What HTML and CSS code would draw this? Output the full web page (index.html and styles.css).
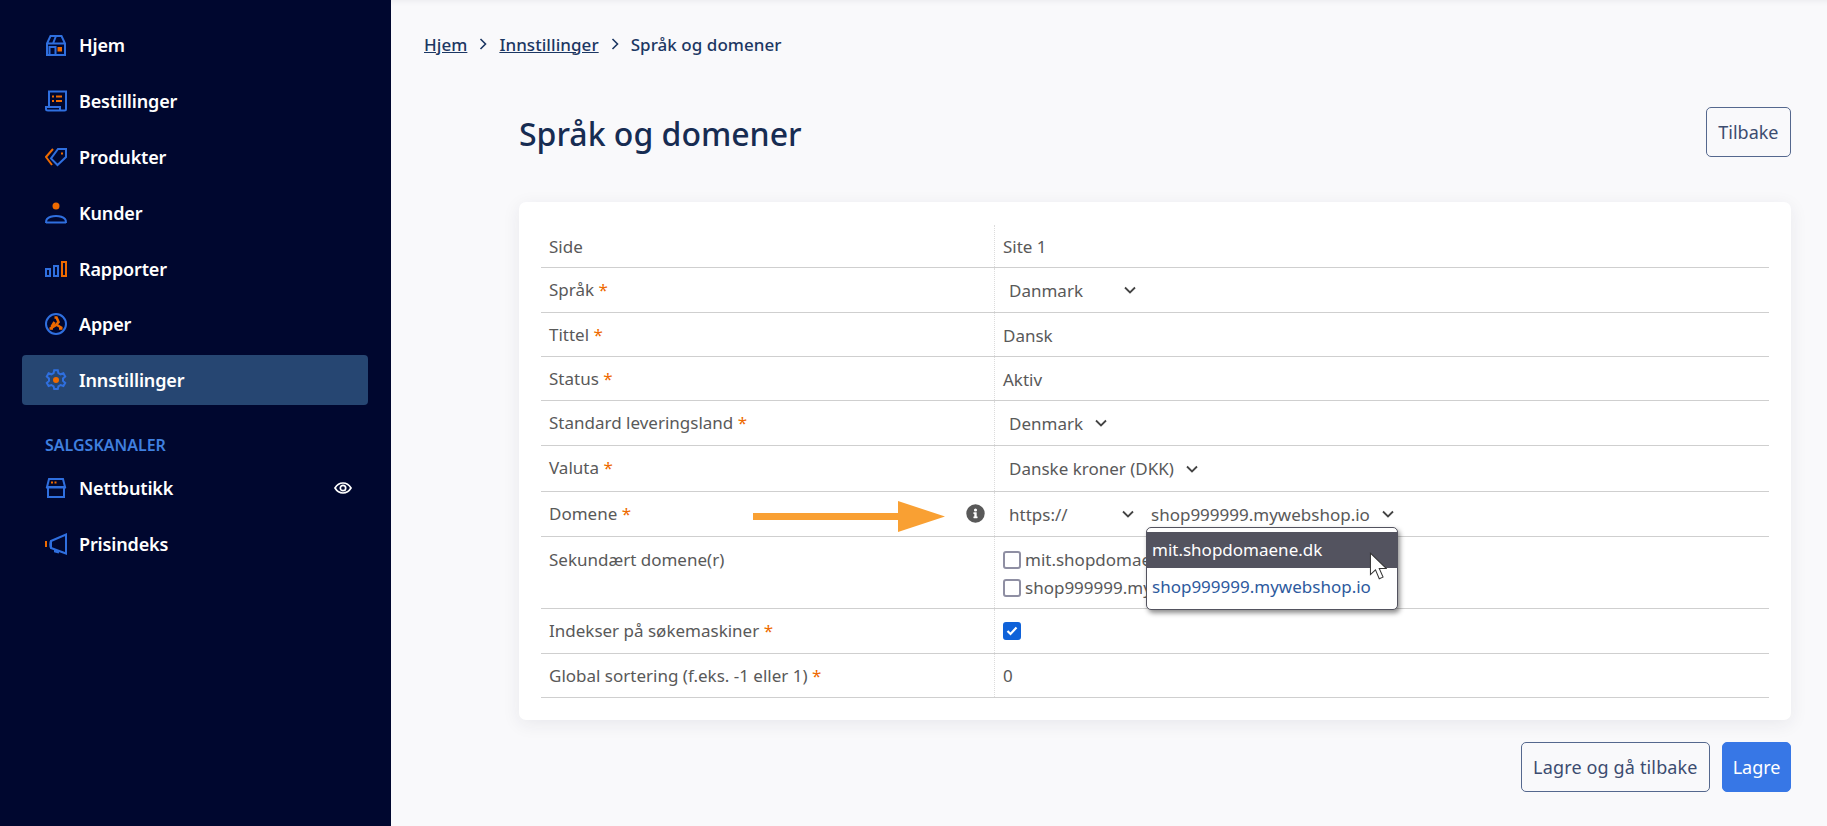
FILE: index.html
```html
<!DOCTYPE html>
<html lang="no">
<head>
<meta charset="utf-8">
<title>Språk og domener</title>
<link rel="stylesheet" href="styles.css">
</head>
<body>
<div class="app">
  <aside class="sidebar">
    <nav class="nav">
      <a class="nav-item"><svg class="nav-icon" viewBox="0 0 22 22"><path class="b" d="M2 9.500 5.500 2h11L20 9.500V21H2zM2 9.500h18M11 2l-3 7.500M4.500 21v-8h6v8"/><rect class="of" x="12.500" y="13" width="4.500" height="4.500"/></svg><span>Hjem</span></a>
      <a class="nav-item"><svg class="nav-icon" viewBox="0 0 22 22"><path class="b" d="M4 17V1.500h17V19c0 1-.5 1.500-1.500 1.500H3c-1 0-2-.5-2-1.500v-2h14v2c0 1 .5 1.500 1.500 1.500"/><path class="o" d="M7 6.500h2M7 11h2M11 6.500h6M11 11h6" stroke-width="2"/></svg><span>Bestillinger</span></a>
      <a class="nav-item"><svg class="nav-icon" viewBox="0 0 22 22"><path class="o" d="M8 3 1 11l6 8"/><path class="b" d="M13 3h8v8l-8.500 8L6 12.500z"/><rect class="of" x="16" y="6.500" width="2" height="2"/></svg><span>Produkter</span></a>
      <a class="nav-item"><svg class="nav-icon" viewBox="0 0 22 22"><circle class="of" cx="11" cy="4" r="3.500"/><path class="b" d="M1 21c0-2 0-3 1-4 2-2 5-3 9-3s7 1 9 3c1 1 1 2 1 4M1 20.500h20"/></svg><span>Kunder</span></a>
      <a class="nav-item"><svg class="nav-icon" viewBox="0 0 22 22"><rect class="b" x="1" y="11" width="4" height="7"/><rect class="b" x="9" y="8" width="4" height="10"/><rect class="o" x="17" y="4" width="4" height="14"/></svg><span>Rapporter</span></a>
      <a class="nav-item"><svg class="nav-icon" viewBox="0 0 22 22"><circle class="b" cx="11" cy="11" r="10"/><path class="o o-thick" d="M9.500 4.500h2l2 4.500-2.500 3-5.500 3.500M11 11.500l6 3.500M9.500 9l-3 5"/><path class="o o-thick" d="M4.500 15.500H8M14 15.500h3.500"/></svg><span>Apper</span></a>
      <a class="nav-item active"><svg class="nav-icon" viewBox="0 0 22 22"><path class="b" d="M9.200 1.200h3.600l.6 2.900 2.200 1.200 2.800-1 1.800 3.200-2.200 1.900v2.500l2.200 2-1.800 3.100-2.800-1-2.200 1.300-.6 2.800H9.200l-.6-2.800-2.200-1.300-2.800 1-1.800-3.100 2.200-2V9.400L1.800 7.500l1.800-3.200 2.800 1 2.200-1.200z"/><circle class="of" cx="11" cy="11" r="3"/></svg><span>Innstillinger</span></a>
      <div class="nav-heading">SALGSKANALER</div>
      <a class="nav-item"><svg class="nav-icon" viewBox="0 0 22 22"><path class="b" d="M4 2h14l2 8H2zM1 10.500h20M3 10.500V20h16v-9.500"/><path class="o" d="M6 5.500h2M9.500 5.500h2" stroke-width="2"/></svg><span>Nettbutikk</span><svg class="eye" viewBox="0 0 18 12"><path d="M1 6c2-3.300 4.700-5 8-5s6 1.700 8 5c-2 3.300-4.700 5-8 5s-6-1.700-8-5z"/><circle cx="9" cy="6" r="2.700"/></svg></a>
      <a class="nav-item"><svg class="nav-icon" viewBox="0 0 22 22"><path class="b" d="M21 1.500v19L6 15v-7zM6 8c-1 1-1 6 0 7M10 16v2.500l4 1"/><path class="o" d="M1 8v6" stroke-width="2"/></svg><span>Prisindeks</span></a>
    </nav>
  </aside>
  <main class="main">
    <ol class="crumbs">
      <li><a>Hjem</a></li>
      <li class="crumb-sep"><svg viewBox="0 0 8 12"><path d="m1.500 1 5 5-5 5"/></svg></li>
      <li><a>Innstillinger</a></li>
      <li class="crumb-sep"><svg viewBox="0 0 8 12"><path d="m1.500 1 5 5-5 5"/></svg></li>
      <li class="crumb-current">Språk og domener</li>
    </ol>
    <div class="content">
      <header class="page-head">
        <h1>Språk og domener</h1>
        <button class="btn btn-outline">Tilbake</button>
      </header>
      <section class="card">
        <div class="row row-first"><div class="label">Side</div><div class="value">Site 1</div></div>
        <div class="row row-sel"><div class="label">Språk <i>*</i></div><div class="value"><span class="select sel-lang">Danmark<svg class="chev" viewBox="0 0 12 8"><path d="m1 1.500 5 5 5-5"/></svg></span></div></div>
        <div class="row"><div class="label">Tittel <i>*</i></div><div class="value value-plain">Dansk</div></div>
        <div class="row"><div class="label">Status <i>*</i></div><div class="value value-plain">Aktiv</div></div>
        <div class="row row-sel"><div class="label">Standard leveringsland <i>*</i></div><div class="value"><span class="select">Denmark<svg class="chev" viewBox="0 0 12 8"><path d="m1 1.500 5 5 5-5"/></svg></span></div></div>
        <div class="row row-val"><div class="label">Valuta <i>*</i></div><div class="value"><span class="select">Danske kroner (DKK)<svg class="chev" viewBox="0 0 12 8"><path d="m1 1.500 5 5 5-5"/></svg></span></div></div>
        <div class="row row-sel">
          <div class="label">Domene <i>*</i>
            <svg class="arrow" viewBox="0 0 192 31"><path d="M0 12h145V0l47 15.500L145 31V19H0z"/></svg>
            <svg class="info" viewBox="0 0 512 512"><path d="M256 8a248 248 0 1 0 0 496 248 248 0 0 0 0-496zm0 110a42 42 0 1 1 0 84 42 42 0 0 1 0-84zm56 254c0 7-5 12-12 12h-88c-7 0-12-5-12-12v-24c0-7 5-12 12-12h12v-64h-12c-7 0-12-5-12-12v-24c0-7 5-12 12-12h64c7 0 12 5 12 12v100h12c7 0 12 5 12 12z"/></svg>
          </div>
          <div class="value">
            <span class="select sel-proto">https://<svg class="chev" viewBox="0 0 12 8"><path d="m1 1.500 5 5 5-5"/></svg></span>
            <span class="select sel-domain">shop999999.mywebshop.io<svg class="chev" viewBox="0 0 12 8"><path d="m1 1.500 5 5 5-5"/></svg>
              <span class="dropdown">
                <span class="opt opt-hover">mit.shopdomaene.dk</span>
                <span class="opt">shop999999.mywebshop.io</span>
                <svg class="cursor" viewBox="0 0 14 23"><path d="M1 1v17l4-3.800 3 7 3-1.300-3-6.900h5.500z"/></svg>
              </span>
            </span>
          </div>
        </div>
        <div class="row row-tall">
          <div class="label">Sekundært domene(r)</div>
          <div class="value checks">
            <label class="check"><span class="box"></span>mit.shopdomaene.dk</label>
            <label class="check"><span class="box"></span>shop999999.mywebshop.io</label>
          </div>
        </div>
        <div class="row row-sel"><div class="label">Indekser på søkemaskiner <i>*</i></div><div class="value"><span class="box box-on"><svg viewBox="0 0 12 10"><path d="m1.500 5 3 3 6-6.500"/></svg></span></div></div>
        <div class="row"><div class="label">Global sortering (f.eks. -1 eller 1) <i>*</i></div><div class="value">0</div></div>
      </section>
      <footer class="actions">
        <button class="btn btn-outline btn-wide">Lagre og gå tilbake</button>
        <button class="btn btn-primary">Lagre</button>
      </footer>
    </div>
  </main>
</div>
</body>
</html>
```
FILE: styles.css
```css
* { box-sizing: border-box; }
html, body { margin: 0; height: 100%; overflow: hidden; }
body { font-family: "Noto Sans", "Open Sans", sans-serif; font-size: 17px; color: #595959; }
.app { display: flex; height: 826px; }

.sidebar { width: 391px; flex: none; background: #00072f; padding: 20px 23px 0 22px; }
.nav { display: flex; flex-direction: column; }
.nav-item { display: flex; align-items: center; height: 50px; margin-bottom: 5.900px; padding: 0 16px 0 23px; border-radius: 4px; color: #fff; font-size: 18px; font-weight: 600; letter-spacing: -.15px; }
.nav-item span { margin-left: 12px; }
.nav-item.active { background: #264672; }
.nav-icon { width: 22px; height: 22px; flex: none; fill: none; }
.b { fill: none; stroke: #2f6fdf; stroke-width: 2; }
.o { fill: none; stroke: #ee6a00; stroke-width: 2; }
.o-thick { stroke-width: 2.600; }
.of { fill: #ee6a00; }
.eye { width: 18px; height: 12px; margin-left: auto; fill: none; stroke: #fff; stroke-width: 1.700; }
.nav-heading { margin: 23px 0 7px; padding-left: 23px; color: #3f7fdf; font-size: 16px; font-weight: 600; height: 22px; }

.main { flex: 1; background: #f9f9fb; padding: 31px 36px 0 33px; box-shadow: inset 0 6px 6px -6px #e4e4e8; }
.crumbs { display: flex; align-items: center; list-style: none; margin: 0; padding: 0; font-size: 17px; font-weight: 500; color: #1c3763; height: 26px; letter-spacing: .05px; }
.crumbs a { text-decoration: underline; }
.crumb-sep { width: 32px; display: flex; justify-content: center; }
.crumb-sep svg { width: 8px; height: 12px; fill: none; stroke: #1c3763; stroke-width: 1.600; }

.content { margin-left: 95px; }
.page-head { display: flex; align-items: center; justify-content: space-between; margin-top: 50px; height: 50px; }
h1 { margin: 2px 0 0; font-size: 32px; font-weight: 500; color: #172c52; }
.btn { height: 50px; padding: 0 11.500px; font: inherit; font-size: 18px; border-radius: 5px; }
.btn-outline { background: transparent; border: 1px solid #55688e; color: #3c4c70; }
.btn-wide { letter-spacing: .15px; }
.btn-primary { background: #3777e6; border: 1px solid #3777e6; color: #fff; padding: 0 9.500px; }

.card { margin-top: 45px; height: 518px; padding: 23px 22px 0; background: #fff; border-radius: 7px; box-shadow: 0 4px 18px rgba(40, 40, 70, .08); }
.row { display: flex; height: 44px; border-bottom: 1px solid #cfcfcf; }
.row-first { height: 43px; }
.row-sel { height: 45px; }
.row-val { height: 46px; }
.row-tall { height: 72px; }
.label { position: relative; width: 453px; flex: none; padding: 10px 8px 0; }
.label i { font-style: normal; color: #ee6a00; }
.value { flex: 1; display: flex; align-items: center; gap: 11px; padding-left: 8px; border-left: 1px dotted #dcdcdc; }
.value-plain { padding-top: 2px; }
.select { display: inline-flex; align-items: center; padding-left: 6px; }
.chev { width: 12px; height: 8px; fill: none; stroke: #444; stroke-width: 1.800; margin-left: 12px; }
.sel-lang .chev { margin-left: 41px; }
.sel-proto { width: 131px; justify-content: space-between; }
.sel-domain { position: relative; }
.arrow { position: absolute; left: 212px; top: 9px; width: 192px; height: 31px; fill: #f9a033; }
.info { position: absolute; right: 9px; top: 12px; width: 19px; height: 19px; fill: #595959; }
.dropdown { position: absolute; left: 1px; top: 24px; width: 252px; height: 83px; padding: 4px 0; display: flex; flex-direction: column; background: #fff; border: 1px solid #53535f; border-radius: 5px; box-shadow: 2px 3px 5px rgba(0, 0, 0, .45); z-index: 2; }
.opt { height: 37px; padding: 0 5px; display: flex; align-items: center; color: #2d5a9e; }
.opt-hover { background: #53535f; color: #fff; }
.cursor { position: absolute; left: 222px; top: 24px; width: 18px; height: 29px; fill: #fff; stroke: #333; stroke-width: .8; }
.checks { flex-direction: column; align-items: flex-start; gap: 5px; padding-top: 11px; justify-content: flex-start; }
.check { display: flex; align-items: center; gap: 4px; }
.box { display: inline-block; width: 18px; height: 18px; flex: none; border: 2px solid #8f8fa3; border-radius: 3px; background: #fff; }
.box-on { background: #0f62d9; border-color: #0f62d9; display: flex; align-items: center; justify-content: center; }
.box-on svg { width: 12px; height: 10px; fill: none; stroke: #fff; stroke-width: 2.200; }
.actions { display: flex; justify-content: flex-end; gap: 12px; margin-top: 22px; }
.row-tall .label { padding-top: 11px; }
```
